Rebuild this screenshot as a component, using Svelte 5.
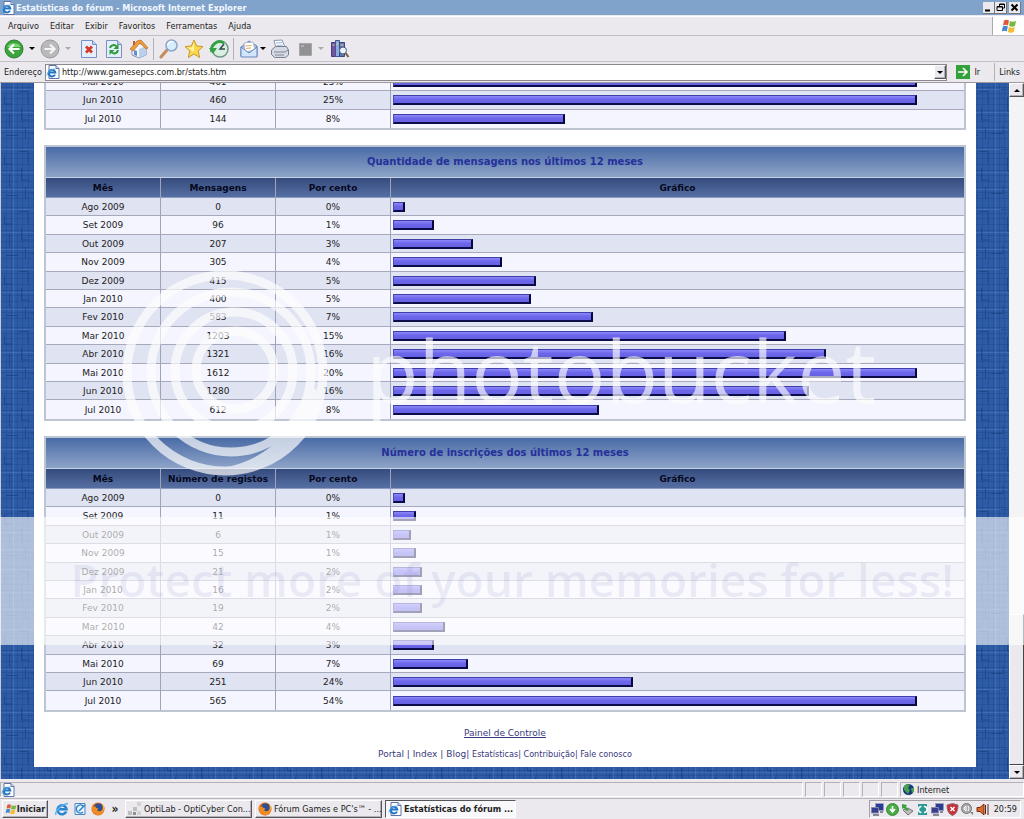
<script>
  const menus = ["Arquivo", "Editar", "Exibir", "Favoritos", "Ferramentas", "Ajuda"];

  // Each row: month, count, percentage, width of the bar
  const tables = [
    {
      id: "topics",
      title: null,
      rows: [
        ["Mai 2010", 461, "25%", 524],
        ["Jun 2010", 460, "25%", 524],
        ["Jul 2010", 144, "8%", 172],
      ],
    },
    {
      id: "messages",
      title: "Quantidade de mensagens nos últimos 12 meses",
      column: "Mensagens",
      rows: [
        ["Ago 2009", 0, "0%", 12],
        ["Set 2009", 96, "1%", 41],
        ["Out 2009", 207, "3%", 80],
        ["Nov 2009", 305, "4%", 109],
        ["Dez 2009", 415, "5%", 143],
        ["Jan 2010", 400, "5%", 138],
        ["Fev 2010", 583, "7%", 200],
        ["Mar 2010", 1203, "15%", 393],
        ["Abr 2010", 1321, "16%", 433],
        ["Mai 2010", 1612, "20%", 524],
        ["Jun 2010", 1280, "16%", 416],
        ["Jul 2010", 612, "8%", 206],
      ],
    },
    {
      id: "registrations",
      title: "Número de inscrições dos últimos 12 meses",
      column: "Número de registos",
      rows: [
        ["Ago 2009", 0, "0%", 12],
        ["Set 2009", 11, "1%", 23],
        ["Out 2009", 6, "1%", 18],
        ["Nov 2009", 15, "1%", 23],
        ["Dez 2009", 21, "2%", 29],
        ["Jan 2010", 16, "2%", 29],
        ["Fev 2010", 19, "2%", 29],
        ["Mar 2010", 42, "4%", 52],
        ["Abr 2010", 32, "3%", 41],
        ["Mai 2010", 69, "7%", 75],
        ["Jun 2010", 251, "24%", 240],
        ["Jul 2010", 565, "54%", 524],
      ],
    },
  ];

  let address = $state("http://www.gamesepcs.com.br/stats.htm");
</script>

{#snippet ieIcon()}
  <svg class="icon-s" viewBox="0 0 14 14" aria-hidden="true">
    <path d="M3 .5h7l3 3v10H3z" fill="#fff" stroke="#5c74a8" />
    <path d="M10 .5v3h3" fill="#cfe0f4" stroke="#5c74a8" />
    <path d="M9 9.6A3.3 3.3 0 1 1 9.3 7.500H3" fill="none" stroke="#2277c4" stroke-width="2" />
    <path d="M1 10.500C1 7 5 4 9.500 4" fill="none" stroke="#57a8e4" />
  </svg>
{/snippet}

{#snippet ieLogo()}
  <svg class="icon-s" viewBox="0 0 14 14" aria-hidden="true">
    <path d="M11.200 9.500A4.500 4.500 0 1 1 11.500 7.200H4" fill="none" stroke="#2b86d0" stroke-width="2.600" />
    <path d="M1 13C-.5 10 6 2 13 1.500" fill="none" stroke="#5bb2ea" stroke-width="1.400" />
  </svg>
{/snippet}

{#snippet firefox()}
  <svg class="icon-s" viewBox="0 0 14 14" aria-hidden="true">
    <circle cx="7" cy="7" r="6.500" fill="#d8641c" />
    <circle cx="7.500" cy="5.500" r="4" fill="#2c4f96" />
    <path d="M1 3C0 11 5 13.500 8 13.200 12 13 14 9 13 4c-.5 4-2 5-4 5.200C6.500 9.500 5.500 8 7.500 6.500 6 6 5 6 4.500 4.500 3 5 2 4.500 1 3z" fill="#ee8c22" />
    <path d="M11 2c1.500 2 1.500 5 0 7 2-1 3-5 0-7z" fill="#ffd34a" />
  </svg>
{/snippet}

{#snippet flag()}
  <svg class="icon-flag" viewBox="0 0 16 16" aria-hidden="true">
    <path d="M3 2.500C5 1.300 6.500 1.500 8 2.500L7 7.500C5.500 6.500 4 6.500 2 7.500z" fill="#e2583a" />
    <path d="M9 3c1.500 1 3.500 1 6 0l-1 5c-2 1-4 1-6 0z" fill="#78b83c" />
    <path d="M1.800 8.500c2-1 3.500-1 5 0l-1 5c-1.500-1-3-1-5 0z" fill="#4386d4" />
    <path d="M7.800 9c2 1 4 1 6 0l-1 5c-2 1-4 1-6 0z" fill="#f4bc34" />
  </svg>
{/snippet}

{#snippet computers()}
  <svg class="icon-t" viewBox="0 0 13 13" aria-hidden="true">
    <path d="M4.500.5h8v7h-8z" fill="#273d96" stroke="#9c9cba" />
    <path d="M.5 4.500h7v5.500h-7z" fill="#39418e" stroke="#8585aa" />
    <path d="M2 12h6M9 9h3" stroke="#65657f" stroke-width="1.500" />
  </svg>
{/snippet}

<div class="window">
  <header class="titlebar">
    {@render ieIcon()}
    <h1>Estatísticas do fórum - Microsoft Internet Explorer</h1>
    <div class="controls">
      <button aria-label="Minimizar"><svg viewBox="0 0 9 9"><path d="M1 7.500h5" stroke="#000" stroke-width="2" /></svg></button>
      <button aria-label="Restaurar"><svg viewBox="0 0 9 9"><path d="M3.500 3V1h5v4h-2M1 3.500h5.500v4H1z M1 4h5M3.500 1.500h5" fill="none" stroke="#000" /></svg></button>
      <button class="close" aria-label="Fechar"><svg viewBox="0 0 9 9"><path d="M1.500 1.500l6 6M7.500 1.500l-6 6" stroke="#000" stroke-width="2" /></svg></button>
    </div>
  </header>

  <nav class="menubar">
    {#each menus as menu}
      <button>{menu}</button>
    {/each}
    <span class="throbber">{@render flag()}</span>
  </nav>

  <div class="toolbar">
    <button aria-label="Voltar">
      <svg viewBox="0 0 20 20">
        <circle cx="10" cy="10" r="9" fill="#3aa53a" stroke="#2c7d34" />
        <path d="M3 8a7.500 6 0 0 1 14 0" fill="#7fd474" />
        <path d="M15.500 10H6M10 5.500L5.500 10l4.500 4.500" fill="none" stroke="#fff" stroke-width="2.200" />
      </svg>
    </button>
    <button class="arrow" aria-label="Histórico de voltar"><i></i></button>
    <button aria-label="Avançar">
      <svg viewBox="0 0 20 20">
        <circle cx="10" cy="10" r="9" fill="#b9b9bb" stroke="#999" />
        <path d="M4.500 10H14M10 5.500l4.500 4.500-4.500 4.500" fill="none" stroke="#f4f4f4" stroke-width="2.200" />
      </svg>
    </button>
    <button class="arrow off" aria-label="Histórico de avançar"><i></i></button>
    <button class="wide" aria-label="Parar">
      <svg viewBox="0 0 20 20">
        <path d="M2.500 1.500h11l4 4v13h-15z" fill="#e4eefc" stroke="#7890c4" />
        <path d="M13.500 1.500v4h4" fill="#b9cef0" stroke="#7890c4" />
        <path d="M7 7.500l6 6M13 7.500l-6 6" stroke="#d8382a" stroke-width="2.800" />
      </svg>
    </button>
    <button class="wide" aria-label="Atualizar">
      <svg viewBox="0 0 20 20">
        <path d="M2.500 1.500h11l4 4v13h-15z" fill="#e4eefc" stroke="#7890c4" />
        <path d="M13.500 1.500v4h4" fill="#b9cef0" stroke="#7890c4" />
        <path d="M6 9c.5-3 4.500-4 6.500-1.500M14 11c-.5 3.500-4.500 4.500-6.500 2" fill="none" stroke="#2c9c38" stroke-width="2" />
        <path d="M14.500 5v5h-5zM5.500 16v-5h5z" fill="#2c9c38" />
      </svg>
    </button>
    <button class="wide" aria-label="Página inicial">
      <svg viewBox="0 0 20 20">
        <path d="M3 9l6-5 8 3v9l-7 3-7-3z" fill="#f3f6fc" stroke="#7d93bd" />
        <path d="M10 10v9l7-3V7z" fill="#bcd0ee" />
        <path d="M1 10L8 2l4-1 7 8-2 1-6-6-7 8z" fill="#ee9b3c" stroke="#b86c26" stroke-width=".7" />
        <path d="M5 11l3 1v5l-3-1z" fill="#668bc8" />
        <path d="M4 2h2v4H4z" fill="#b66040" />
      </svg>
    </button>
    <span class="sep"></span>
    <button class="wide" aria-label="Pesquisar">
      <svg viewBox="0 0 20 20">
        <path d="M8 11l-6 7" stroke="#c48b5b" stroke-width="3" stroke-linecap="round" />
        <circle cx="12.500" cy="6.500" r="5.500" fill="#d6edfb" stroke="#8ca6cc" stroke-width="1.500" />
        <path d="M9 6c0-3 3-4 5-3" fill="none" stroke="#fff" stroke-width="1.500" />
      </svg>
    </button>
    <button class="wide" aria-label="Favoritos">
      <svg viewBox="0 0 20 20">
        <path d="M10 1l2.700 6 6.300.6-4.800 4.300 1.500 6.600L10 15l-5.700 3.500 1.500-6.600L1 7.600 7.300 7z" fill="#fbd84a" stroke="#c8982c" />
        <path d="M10 3v10L3 8.500h5z" fill="#fff3a0" />
      </svg>
    </button>
    <button class="wide" aria-label="Histórico">
      <svg viewBox="0 0 20 20">
        <circle cx="11" cy="10" r="8" fill="#d8efdf" stroke="#71998b" stroke-width="1.500" />
        <path d="M3 13A8 8 0 0 1 15 4" fill="none" stroke="#36a046" stroke-width="3" />
        <path d="M0 9h8l-4 6z" fill="#36a046" />
        <path d="M15 5l-4 5h5" fill="none" stroke="#33474f" stroke-width="1.500" />
      </svg>
    </button>
    <span class="sep"></span>
    <button class="mail" aria-label="Correio">
      <svg viewBox="0 0 20 20">
        <path d="M2 8l8-6 8 5v10H2z" fill="#9ebee9" stroke="#6685bc" />
        <path d="M5 4l9-1 2 8-10 2z" fill="#fff" stroke="#b4bdcd" />
        <path d="M6.500 7l6-.6M7 9.500l5-.6" stroke="#e3a95d" />
        <path d="M2 8l8 6 8-6v10H2z" fill="#d3e5fb" stroke="#6685bc" />
      </svg>
    </button>
    <button class="arrow small" aria-label="Opções de correio"><i></i></button>
    <button class="wide" aria-label="Imprimir">
      <svg viewBox="0 0 20 20">
        <path d="M6 9L4 1.500 12 1l3 7z" fill="#fff" stroke="#8b97b4" />
        <path d="M6 4l6-.5M7 6.500l6-.5" stroke="#9ab4dd" />
        <path d="M1.500 11l4-3.500h11l2 3.500v5l-3 2.500h-11l-3-3z" fill="#d5d9e1" stroke="#747f92" />
        <path d="M4 13h11l3-2M5 16h9" fill="none" stroke="#7f899b" />
      </svg>
    </button>
    <button class="wide" aria-label="Editar" disabled>
      <svg viewBox="0 0 20 20">
        <path d="M4.500 4.500h12v12h-12z" fill="#929294" stroke="#a6a6a8" />
        <path d="M6 7h3" stroke="#ccc" />
      </svg>
    </button>
    <button class="arrow off small" aria-label="Opções de edição"><i></i></button>
    <button class="books" aria-label="Pesquisar referências">
      <svg viewBox="0 0 20 20">
        <path d="M1.500 3.500h4v14h-4z" fill="#7652a2" stroke="#4c3b7c" />
        <path d="M5.500 1.500h4v16h-4z" fill="#89aede" stroke="#42598c" />
        <path d="M9.500 3.500h5v14h-5z" fill="#6074b8" stroke="#384883" />
        <path d="M2.500 6h2M6.500 5h2M10.500 6h3" stroke="#e9d48a" />
        <circle cx="13" cy="11.500" r="3.500" fill="#e8f4fc" stroke="#515c7c" />
        <path d="M15.500 14l3 4" stroke="#7c5b3c" stroke-width="2" />
      </svg>
    </button>
  </div>

  <form class="addressbar" onsubmit={(e) => e.preventDefault()}>
    <label for="address">Endereço</label>
    <div class="field">
      {@render ieIcon()}
      <input id="address" type="text" bind:value={address} />
      <button type="button" class="raised" aria-label="Abrir lista"><i></i></button>
    </div>
    <button class="go">
      <svg viewBox="0 0 14 14" aria-hidden="true">
        <path d="M0 0h14v14H0z" fill="#33a13a" />
        <path d="M2 7h9M7 3l4 4-4 4" fill="none" stroke="#fff" stroke-width="1.600" />
      </svg>
      Ir
    </button>
    <a class="links" href="#links">Links</a>
  </form>

  <div class="viewport">
    <main class="view">
      <!-- Woven blue backdrop -->
      <svg class="weave" aria-hidden="true">
        <defs>
          <pattern id="weave" width="60" height="60" patternUnits="userSpaceOnUse">
            <path d="M0 0h60v60H0z" fill="#2d5ba5" />
            <path
              d="M5.500 0v60M10.500 0v60M16.500 0v60M21.500 0v60M27.500 0v60M32.500 0v60M38.500 0v60M43.500 0v60M49.500 0v60M55.500 0v60M0 4.500h60M0 10.500h60M0 15.500h60M0 21.500h60M0 27.500h60M0 32.500h60M0 38.500h60M0 44.500h60M0 49.500h60M0 55.500h60"
              stroke="#1c4488" stroke-opacity=".4"
            />
            <path d="M0 6.500h60M0 29.500h60M0 46.500h60M12.500 0v60M34.500 0v60M51.500 0v60" stroke="#6e9ad8" stroke-opacity=".25" />
            <path
              d="M3.500 12v9h8M18 8.500h9v12M8.500 30v14M20.500 25v12h8M30 50.500h12v-8M46.500 14v14h6M40 6.500h9M5 52.500h12M24.500 44v12M54.500 34v12h-8"
              fill="none" stroke="#12346f" stroke-opacity=".5"
            />
          </pattern>
        </defs>
        <rect width="100%" height="100%" fill="url(#weave)" />
      </svg>

      <div class="page">
        {#each tables as table (table.id)}
          <section class="panel">
            <table>
              <colgroup>
                <col class="month" />
                <col class="narrow" />
                <col class="narrow" />
                <col />
              </colgroup>
              {#if table.title}
                <thead>
                  <tr class="title"><th colspan="4">{table.title}</th></tr>
                  <tr class="heads">
                    <th>Mês</th>
                    <th>{table.column}</th>
                    <th>Por cento</th>
                    <th>Gráfico</th>
                  </tr>
                </thead>
              {/if}
              <tbody class:shifted={!table.title}>
                {#each table.rows as [month, count, percent, width]}
                  <tr>
                    <td>{month}</td>
                    <td>{count}</td>
                    <td>{percent}</td>
                    <td class="graph"><div class="bar" style="width: {width}px"></div></td>
                  </tr>
                {/each}
              </tbody>
            </table>
          </section>
        {/each}

        <footer>
          <p><a class="panel-link" href="#painel">Painel de Controle</a></p>
          <p>
            <a href="#portal">Portal</a> | <a href="#index">Index</a> | <a href="#blog">Blog</a>|
            <span class="tight">
              <a href="#stats">Estatísticas</a>| <a href="#contrib">Contribuição</a>| <a href="#fale">Fale conosco</a>
            </span>
          </p>
        </footer>
      </div>
    </main>
    <div class="scrollbar">
      <button class="raised up" aria-label="Rolar para cima"><i></i></button>
      <div class="track"></div>
      <div class="thumb"></div>
      <button class="raised" aria-label="Rolar para baixo"><i></i></button>
    </div>
  </div>

  <div class="statusbar">
    <span class="message">{@render ieIcon()}</span>
    <span class="cell"></span>
    <span class="cell"></span>
    <span class="cell"></span>
    <span class="cell"></span>
    <span class="cell"></span>
    <span class="zone">
      <svg class="icon-t" viewBox="0 0 13 13" aria-hidden="true">
        <circle cx="6.500" cy="6.500" r="5.500" fill="#16387e" />
        <path d="M2 3c2-2 4-2 6-1L6 5l2 2-2 4C4 10 4 8 2 7zM9 5l3 0v3l-2 2z" fill="#47a04c" />
      </svg>
      Internet
    </span>
  </div>

  <footer class="taskbar">
    <button class="start raised">{@render flag()}Iniciar</button>
    <div class="quick">
      <button aria-label="Internet Explorer">{@render ieLogo()}</button>
      <button aria-label="Outlook Express">
        <svg class="icon-s" viewBox="0 0 14 14" aria-hidden="true">
          <path d="M2 1.500h10v11H2z" fill="#e6f2fd" stroke="#4b87c0" />
          <path d="M10 4a4 4 0 1 0 0 6M6 9l6-6" fill="none" stroke="#2e82c6" stroke-width="1.500" />
        </svg>
      </button>
      <button aria-label="Firefox">{@render firefox()}</button>
    </div>
    <button class="more" aria-label="Mais">»</button>
    <button class="task raised">
      <svg class="icon-s" viewBox="0 0 14 14" aria-hidden="true">
        <path d="M0 9h4v4H0zM5 5h4v4H5z" fill="#bdbdbf" />
        <path d="M9 0h4v4H9zM9 9h4v4H9z" fill="#d2d2d4" />
        <path d="M5 10h3v3H5z" fill="#8f8f92" />
      </svg>
      <span>OptiLab - OptiCyber Con...</span>
    </button>
    <button class="task raised">{@render firefox()}<span>Fórum Games e PC's™ - ...</span></button>
    <button class="task active">{@render ieIcon()}<span>Estatísticas do fórum ...</span></button>
    <div class="tray">
      {@render computers()}
      <svg class="icon-t" viewBox="0 0 13 13" aria-hidden="true">
        <circle cx="6.500" cy="6.500" r="6" fill="#48ac45" stroke="#398838" />
        <path d="M6.500 3v4.500M4 6l2.500 3L9 6" fill="none" stroke="#fff" stroke-width="1.600" />
      </svg>
      <svg class="icon-t" viewBox="0 0 13 13" aria-hidden="true">
        <path d="M2 7l5-2 5 3-5 4z" fill="#bdbdbd" stroke="#777" />
        <path d="M1 1l5 1-1 2 3 3-2 1-3-3-2 1z" fill="#3aa040" />
      </svg>
      <svg class="icon-t" viewBox="0 0 13 13" aria-hidden="true">
        <path d="M2 1h9v11H2z" fill="#2b9a94" />
        <path d="M5.500 3.500a3 3 0 0 0 0 6M8 3.500a3 3 0 0 1 0 6" fill="none" stroke="#fff" stroke-width="1.400" />
      </svg>
      {@render computers()}
      <svg class="icon-t" viewBox="0 0 13 13" aria-hidden="true">
        <path d="M1 2l5.500-1.500L12 2c0 6-2 9-5.500 10.500C3 11 1 8 1 2z" fill="#c8303a" stroke="#8e6670" />
        <path d="M4.500 4l4 4M8.500 4l-4 4" stroke="#fff" stroke-width="1.500" />
      </svg>
      <svg class="icon-t" viewBox="0 0 13 13" aria-hidden="true">
        <circle cx="5.500" cy="5.500" r="5" fill="#aaa" stroke="#76767a" />
        <path d="M3 5l2-2v5L3 6zM7 3q2 2.500 0 5" fill="none" stroke="#fff" />
        <path d="M9 9h3v3z" fill="#777" />
      </svg>
      <svg class="icon-t" viewBox="0 0 13 13" aria-hidden="true">
        <path d="M1 4.500h3L8 1v11L4 8.500H1z" fill="#d76b2a" stroke="#7f2b12" />
        <path d="M9.500 2v9M12 1v11" stroke="#5c2418" />
      </svg>
      <time>20:59</time>
    </div>
  </footer>

  <!-- Translucent overlay lying over the whole window -->
  <div class="watermark">
    <svg class="rings" viewBox="0 0 220 220" aria-hidden="true">
      <g fill="none" stroke="#fff" stroke-width="9">
        <circle cx="110" cy="110" r="98" />
        <circle cx="116" cy="109" r="80" />
        <circle cx="119" cy="108" r="59" />
        <circle cx="120" cy="107" r="39" />
      </g>
      <path d="M202 128A94 94 0 0 1 112 204 100 100 0 0 0 192 118z" fill="#fff" />
    </svg>
    <span class="brand">photobucket</span>
    <div class="band"><span>Protect more of your memories for less!</span></div>
  </div>
</div>

<style>
  :global(body) {
    background: #ece9ec;
  }

  .window {
    position: relative;
    display: flex;
    flex-direction: column;
    height: 100vh;
    overflow: hidden;
    background: #ebe9ed;
    color: #222;
    font: 9px/12px "DejaVu Sans Condensed", "DejaVu Sans", sans-serif;
  }

  button {
    display: flex;
    align-items: center;
    justify-content: center;
    margin: 0;
    padding: 0;
    border: 0;
    background: none;
    color: inherit;
    font: inherit;
    white-space: nowrap;
  }

  svg {
    display: block;
    flex: none;
  }

  .icon-s {
    width: 14px;
    height: 14px;
  }

  .icon-t {
    width: 13px;
    height: 13px;
  }

  .icon-flag {
    width: 16px;
    height: 16px;
  }

  .raised {
    border: 1px solid;
    border-color: #fff #55555a #55555a #fff;
    background: #ebe9ed;
    box-shadow: inset -1px -1px #b4b2b8;
  }

  i {
    border: 3px solid transparent;
    border-top-color: #000;
    border-bottom: 0;
  }

  .titlebar {
    display: flex;
    align-items: center;
    flex: none;
    height: 15px;
    padding: 0 3px 0 1px;
    background: #7fa3cb;
  }

  .titlebar h1 {
    flex: 1;
    margin: 0 0 0 1px;
    color: #f4f8ff;
    font-size: 9px;
    font-weight: bold;
  }

  .controls {
    display: flex;
  }

  .controls button {
    width: 12px;
    height: 12px;
    border-right: 1px solid #777;
    border-bottom: 1px solid #777;
    background: #ebe9ed;
  }

  .controls svg {
    width: 9px;
    height: 9px;
  }

  .controls .close {
    margin-left: 2px;
  }

  .menubar {
    display: flex;
    align-items: center;
    gap: 11px;
    flex: none;
    height: 20px;
    padding-left: 8px;
    border-top: 1px solid #fff;
    border-bottom: 1px solid #c2c0c4;
    box-sizing: border-box;
    margin-top: 1px;
  }

  .throbber {
    display: flex;
    align-items: center;
    justify-content: center;
    align-self: stretch;
    width: 31px;
    margin-left: auto;
    border-left: 1px solid #aaa;
    background: #fff;
  }

  .toolbar {
    display: flex;
    align-items: center;
    flex: none;
    height: 25px;
    padding-left: 4px;
    border-bottom: 1px solid #c2c0c4;
  }

  .toolbar button {
    width: 20px;
    height: 20px;
  }

  .toolbar svg {
    width: 20px;
    height: 20px;
  }

  .toolbar .arrow {
    width: 16px;
  }

  .toolbar .small {
    width: 8px;
  }

  .toolbar .off i {
    border-top-color: #aaa;
  }

  .toolbar .wide {
    width: 25px;
  }

  .toolbar .mail {
    margin-left: 3px;
  }

  .toolbar .books {
    width: 30px;
  }

  .sep {
    width: 1px;
    height: 22px;
    margin: 0 2px;
    background: #b3b1b6;
  }

  .addressbar {
    display: flex;
    align-items: center;
    flex: none;
    height: 21px;
    padding-left: 4px;
    border-bottom: 1px solid #9c9a9f;
    box-sizing: border-box;
  }

  .field {
    display: flex;
    align-items: center;
    flex: 1;
    height: 15px;
    margin-left: 3px;
    border: 1px solid #8b898e;
    background: #fff;
  }

  .field input {
    flex: 1;
    min-width: 0;
    margin: 0;
    padding: 0 2px;
    border: 0;
    outline: 0;
    background: none;
    color: #222;
    font: inherit;
  }

  .field .raised {
    width: 12px;
    height: 14px;
  }

  .go {
    gap: 4px;
    margin: 0 14px 0 9px;
  }

  .go svg {
    width: 14px;
    height: 14px;
  }

  .links {
    padding: 3px 4px;
    border-left: 1px solid #b3b1b6;
    color: inherit;
    text-decoration: none;
  }

  .viewport {
    display: flex;
    flex: 1;
    min-height: 0;
  }

  .view {
    position: relative;
    display: flex;
    flex: 1;
    flex-direction: column;
    justify-content: flex-end;
    padding: 0 33px 12px;
    overflow: hidden;
    border-left: 1px solid #c6cad4;
  }

  .weave {
    position: absolute;
    inset: 0;
    width: 100%;
    height: 100%;
  }

  .page {
    position: relative;
    flex: none;
    padding: 0 10px;
    background: #fff;
    font: 9px/12px "DejaVu Sans", sans-serif;
  }

  .panel {
    margin-bottom: 15px;
    border: 2px solid #bdc5d2;
  }

  table {
    width: 100%;
    border-spacing: 0;
    table-layout: fixed;
  }

  .month {
    width: 114px;
  }

  .narrow {
    width: 115px;
  }

  th,
  td {
    box-sizing: border-box;
    height: 18px;
    padding: 0;
    border-bottom: 1px solid #a6a9bb;
    text-align: center;
  }

  tbody tr:nth-child(5n + 2) td,
  tbody tr:nth-child(5n + 4) td {
    height: 19px;
  }

  td + td,
  th + th {
    border-left: 1px solid #a0a3b6;
  }

  tbody tr:last-child td {
    border-bottom: 0;
  }

  .title th {
    height: 31px;
    border-color: #c3cfe2;
    background: linear-gradient(#4a6ba6, #8ea4c8);
    color: #25309a;
    font-size: 10px;
  }

  .heads th {
    height: 20px;
    border-bottom-color: #8c9cc0;
    background: linear-gradient(#354b7e, #566fa3);
    color: #05081c;
  }

  tbody tr {
    background: #dfe3f2;
  }

  tbody tr:nth-child(even) {
    background: #f4f5fe;
  }

  .shifted tr {
    background: #f4f5fe;
  }

  .shifted tr:nth-child(even) {
    background: #dfe3f2;
  }

  .graph {
    padding-left: 2px;
  }

  .bar {
    box-sizing: border-box;
    max-width: 100%;
    height: 10px;
    border: 1px solid;
    border-width: 1px 2px 2px 1px;
    border-color: #3f3fa8 #07073c #0c0c4a #4a4ac0;
    background: linear-gradient(#8c86fa, #6c66ea 50%, #6660e2);
  }

  .page footer {
    padding-bottom: 6px;
  }

  .page p {
    margin: 0;
    padding-bottom: 9px;
    color: #38387c;
    text-align: center;
  }

  .page p + p {
    padding-bottom: 1px;
  }

  .page a {
    color: #38387c;
    text-decoration: none;
  }

  .page .panel-link {
    text-decoration: underline;
  }

  .tight {
    font: 9px/12px "DejaVu Sans Condensed", sans-serif;
  }

  .scrollbar {
    display: flex;
    flex-direction: column;
    width: 15px;
    background: #f4f3f6;
  }

  .scrollbar .raised {
    height: 14px;
  }

  .scrollbar .up i {
    border-top: 0;
    border-bottom: 3px solid #000;
  }

  .track {
    flex: 518;
  }

  .thumb {
    flex: 149;
    border: 1px solid;
    border-color: #fff #444 #444 #fff;
    background: #ebe9ed;
  }

  .statusbar {
    display: flex;
    align-items: center;
    gap: 2px;
    flex: none;
    height: 17px;
    margin-top: 2px;
    border-bottom: 1px solid #b9b7bc;
  }

  .statusbar span {
    box-sizing: border-box;
    height: 15px;
    border: 1px solid;
    border-color: #b4b2b7 #fff #fff #b4b2b7;
  }

  .message {
    flex: 1;
  }

  .cell {
    width: 17px;
  }

  .statusbar .zone {
    display: flex;
    align-items: center;
    gap: 2px;
    width: 124px;
    padding-left: 1px;
  }

  .taskbar {
    display: flex;
    align-items: center;
    gap: 3px;
    flex: none;
    height: 20px;
    padding: 0 3px 0 2px;
  }

  .start {
    width: 46px;
    height: 18px;
    font-weight: bold;
  }

  .start .icon-flag {
    width: 12px;
  }

  .quick {
    display: flex;
    gap: 4px;
    margin-left: 4px;
  }

  .more {
    width: 14px;
    font-size: 12px;
    font-weight: bold;
  }

  .task {
    gap: 2px;
    justify-content: flex-start;
    width: 127px;
    height: 18px;
    padding-left: 2px;
  }

  .active {
    width: auto;
    padding-right: 2px;
    border: 1px solid;
    border-color: #55555a #fff #fff #55555a;
    background: #f8f7fa;
    font-weight: bold;
  }

  .tray {
    display: flex;
    align-items: center;
    gap: 2px;
    height: 16px;
    margin-left: auto;
    padding: 0 3px 0 1px;
    border: 1px solid;
    border-color: #a3a1a6 #fff #fff #a3a1a6;
  }

  .tray time {
    padding-left: 3px;
  }

  .watermark {
    position: absolute;
    inset: 0;
    overflow: hidden;
    pointer-events: none;
    font-family: "Open Sans", sans-serif;
    white-space: nowrap;
  }

  .rings {
    position: absolute;
    top: 263px;
    left: 115px;
    width: 220px;
    height: 220px;
    opacity: 0.68;
  }

  .brand {
    position: absolute;
    top: 320px;
    left: 366px;
    color: #fff;
    font-size: 86px;
    font-weight: 500;
    line-height: 100px;
    opacity: 0.65;
  }

  .band {
    position: absolute;
    top: 517px;
    right: 0;
    left: 0;
    height: 128px;
    background: rgba(255, 255, 255, 0.62);
    text-align: center;
  }

  .band span {
    color: rgba(120, 120, 190, 0.13);
    font-size: 46px;
    font-weight: 600;
    line-height: 124px;
  }
</style>
